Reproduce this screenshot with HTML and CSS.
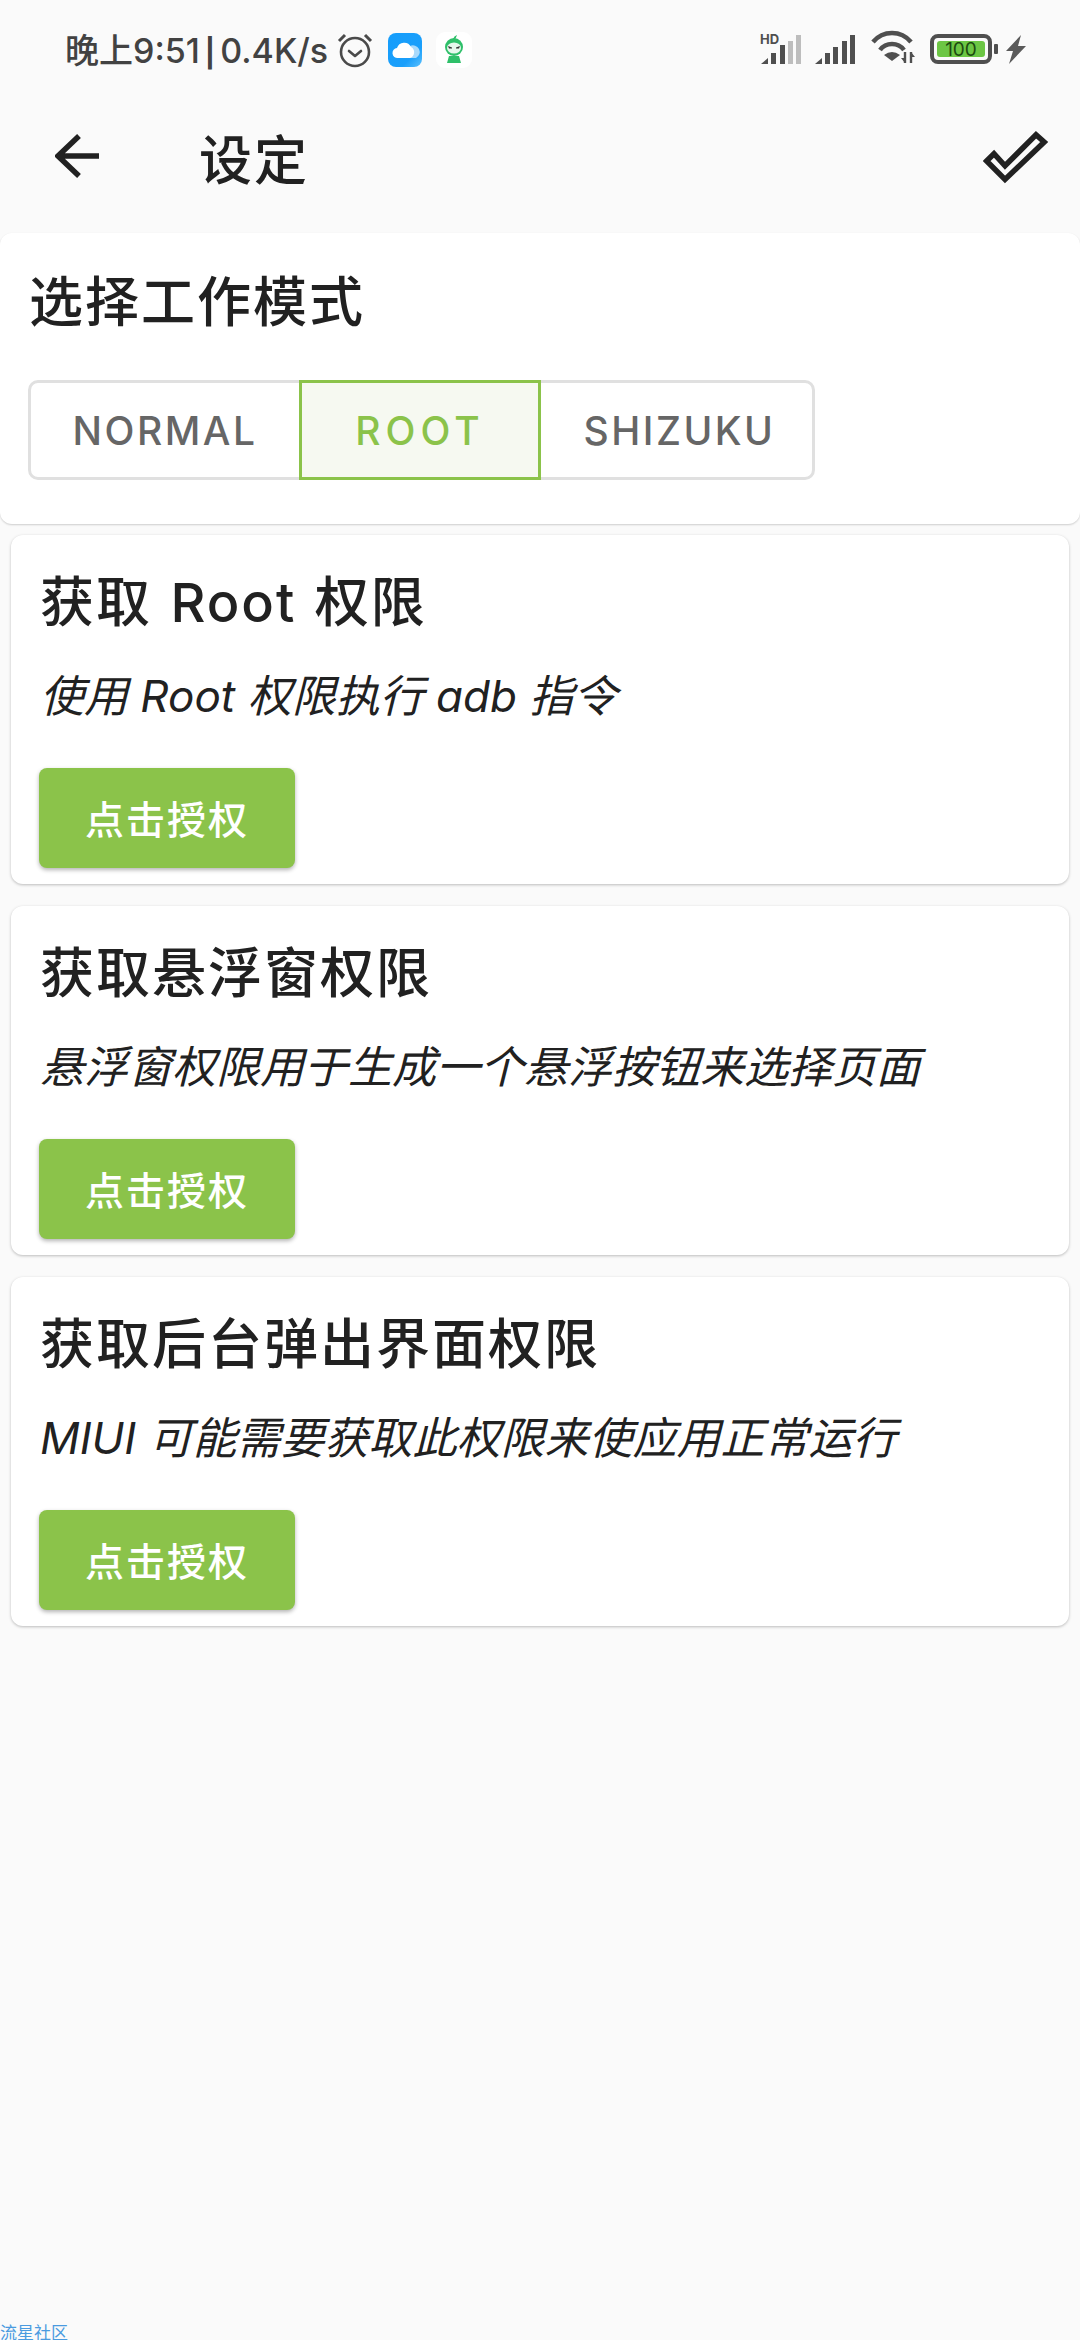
FILE: index.html
```html
<!DOCTYPE html>
<html lang="zh-CN">
<head>
<meta name="viewport" content="width=device-width, initial-scale=1">
<title>设定</title>
<link rel="stylesheet" href="styles.css">
</head>
<body>

<div class="status-bar">
  <div class="status-left">
    <span class="status-text">晚上9:51<span class="status-sep">|</span>0.4K/s</span>
    <svg class="ic-alarm" width="36" height="36" viewBox="0 0 36 36" fill="none" stroke="#4a4a4a">
      <circle cx="18" cy="20" r="14" stroke-width="2.6"/>
      <path d="M12 19l6 5 6-5" stroke-width="2.6" stroke-linecap="round" stroke-linejoin="round"/>
      <path d="M2 9l6-6M34 9l-6-6" stroke-width="3"/>
    </svg>
    <svg class="ic-cloud" width="34" height="34" viewBox="0 0 34 34">
      <defs>
        <linearGradient id="cloudBg" x1="0" y1="0" x2="1" y2="1">
          <stop offset="0" stop-color="#159dfb"/>
          <stop offset="0.7" stop-color="#1a9ffb"/>
          <stop offset="1" stop-color="#5cc0fc"/>
        </linearGradient>
      </defs>
      <rect width="34" height="34" rx="8" fill="url(#cloudBg)"/>
      <path d="M22 13a6 6 0 0 1 6 12H18z" fill="#a9dafc"/>
      <path d="M10 25a5 5 0 0 1-1-10 7.5 7.5 0 0 1 14-1 6 6 0 0 1-1 11z" fill="#fff"/>
    </svg>
    <svg class="ic-mascot" width="36" height="36" viewBox="0 0 36 36">
      <rect width="36" height="36" rx="9" fill="#fff"/>
      <circle cx="18" cy="15" r="9" fill="#2fc06a"/>
      <path d="M17 7q1-3 4-4-1 3-2 4z" fill="#2fc06a"/>
      <ellipse cx="18" cy="16" rx="7" ry="5.5" fill="#e6f7ec"/>
      <path d="M12 14l4 1.500v1h-3zM24 14l-4 1.500v1h3z" fill="#333"/>
      <path d="M13 24h10l2 7H11z" fill="#2fc06a"/>
    </svg>
  </div>
  <div class="status-right">
    <div class="signal-wrap">
      <span class="hd">HD</span>
      <svg width="41" height="30" viewBox="0 0 41 30">
        <path d="M1 30l7-6v6z" fill="#4f4f4f"/>
        <rect x="11" y="19" width="5" height="11" fill="#4f4f4f"/>
        <rect x="20" y="11" width="5" height="19" fill="#4f4f4f"/>
        <rect x="28" y="7" width="5" height="23" fill="#bdbdbd"/>
        <rect x="36" y="1" width="5" height="29" fill="#bdbdbd"/>
      </svg>
    </div>
    <svg width="41" height="30" viewBox="0 0 41 30">
      <path d="M0 30l7-6v6z" fill="#4f4f4f"/>
      <rect x="10" y="19" width="5" height="11" fill="#4f4f4f"/>
      <rect x="18" y="13" width="5" height="17" fill="#4f4f4f"/>
      <rect x="27" y="7" width="5" height="23" fill="#4f4f4f"/>
      <rect x="35" y="1" width="5" height="29" fill="#4f4f4f"/>
    </svg>
    <svg class="ic-wifi" width="44" height="34" viewBox="0 0 44 34" fill="none" stroke="#4f4f4f">
      <path d="M2 12C12 0 30 0 40 12" stroke-width="4.500"/>
      <path d="M9 20C15 12 27 12 33 20" stroke-width="4.500"/>
      <path d="M21 31l-8-6q8-6 16 0z" fill="#4f4f4f" stroke="none"/>
      <path d="M34 22v11M40 22v11" stroke-width="2.400"/>
      <path d="M30 28l4 5v-5zM44 27l-4-5v5z" fill="#4f4f4f" stroke="none"/>
    </svg>
    <div class="battery">
      <div class="battery-body"><span class="battery-fill">100</span></div>
      <span class="battery-nub"></span>
    </div>
    <svg width="20" height="29" viewBox="0 0 20 29">
      <path d="M15 0L0 16h7l-4 13L20 11h-8z" fill="#5a5a5a"/>
    </svg>
  </div>
</div>

<div class="app-bar">
  <svg class="back" width="44" height="44" viewBox="0 0 44 44" fill="none" stroke="#212121" stroke-width="5.500">
    <path d="M44 22H4M24 2L3 22l21 20"/>
  </svg>
  <h1 class="page-title">设定</h1>
  <svg class="check" width="66" height="54" viewBox="0 0 66 54" fill="none" stroke="#212121" stroke-width="5.500" stroke-linejoin="miter">
    <path d="M3.600 31L11 23.700l11 12.100L53 4.700l8.200 7.300L22 49.500z"/>
  </svg>
</div>

<div class="mode-card">
  <h2 class="mode-title">选择工作模式</h2>
  <div class="segments">
    <div class="seg seg-normal">NORMAL</div>
    <div class="seg seg-root">ROOT</div>
    <div class="seg seg-shizuku">SHIZUKU</div>
  </div>
</div>

<div class="card">
  <h3 class="card-title title-root">获取 Root 权限</h3>
  <p class="card-desc">使用 Root 权限执行 adb 指令</p>
  <button class="grant">点击授权</button>
</div>

<div class="card">
  <h3 class="card-title">获取悬浮窗权限</h3>
  <p class="card-desc">悬浮窗权限用于生成一个悬浮按钮来选择页面</p>
  <button class="grant">点击授权</button>
</div>

<div class="card">
  <h3 class="card-title">获取后台弹出界面权限</h3>
  <p class="card-desc">MIUI 可能需要获取此权限来使应用正常运行</p>
  <button class="grant">点击授权</button>
</div>

<div class="watermark">流星社区</div>

</body>
</html>
```

FILE: styles.css
```css
* {
  box-sizing: border-box;
}
html, body {
  margin: 0;
  height: 2340px;
}
body {
  position: relative;
  overflow: hidden;
  background: #fafafa;
  color: #212121;
  font-family: "Inter", "Noto Sans CJK SC", sans-serif;
}

/* status bar */
.status-bar {
  height: 100px;
  display: flex;
  justify-content: space-between;
  align-items: flex-start;
  padding: 32px 54px 0 65px;
}
.status-left {
  display: flex;
  align-items: center;
  height: 36px;
}
.status-text {
  margin-top: -3px;
  font-size: 34px;
  font-weight: 500;
  color: #424242;
  white-space: nowrap;
  width: 272px;
}
.status-sep {
  margin: 0 5px;
  font-size: 28px;
  font-weight: 700;
}
.ic-cloud {
  margin-left: 15px;
}
.ic-mascot {
  margin-left: 14px;
}
.status-right {
  display: flex;
  align-items: flex-end;
  height: 32px;
}
.signal-wrap {
  position: relative;
  margin-right: 14px;
  height: 30px;
}
.hd {
  position: absolute;
  left: 0;
  top: -1px;
  font-size: 13px;
  font-weight: 700;
  line-height: 13px;
  color: #4f4f4f;
}
.ic-wifi {
  margin: 0 15px;
}
.battery {
  display: flex;
  align-items: center;
  height: 30px;
  margin-right: 8px;
}
.battery-body {
  width: 62px;
  height: 30px;
  border: 4px solid #4f4f4f;
  border-radius: 8px;
  padding: 3px;
}
.battery-fill {
  display: block;
  height: 16px;
  line-height: 17px;
  font-size: 19px;
  text-align: center;
  color: #1c4a10;
  background: #6cc644;
  border-radius: 3px;
}
.battery-nub {
  width: 4px;
  height: 10px;
  margin-left: 2px;
  background: #4f4f4f;
  border-radius: 1px;
}

/* app bar */
.app-bar {
  height: 133px;
  display: flex;
  align-items: flex-start;
  padding: 34px 31px 0 55px;
}
.back {
  flex: none;
}
.page-title {
  margin: -3px 0 0 100px;
  font-size: 53px;
  line-height: 60px;
  font-weight: 500;
  letter-spacing: 2px;
}
.check {
  flex: none;
  margin-left: auto;
  margin-top: -4px;
}

/* mode card */
.mode-card {
  height: 291px;
  padding: 38px 28px 0;
  background: #fff;
  border-radius: 12px;
  box-shadow: 0 1px 2px rgba(0,0,0,0.18);
}
.mode-title {
  margin: 0;
  padding-left: 1px;
  font-size: 54px;
  line-height: 64px;
  font-weight: 500;
  letter-spacing: 2px;
}
.segments {
  display: flex;
  width: 787px;
  height: 100px;
  margin-top: 45px;
  border: 3px solid #e0e0e0;
  border-radius: 10px;
}
.seg {
  display: flex;
  align-items: center;
  justify-content: center;
  font-size: 39px;
  font-weight: 500;
  letter-spacing: 2.500px;
  color: #666;
}
.seg-normal {
  width: 268px;
}
.seg-root {
  width: 242px;
  margin: -3px 0;
  border: 3px solid #8bc34a;
  background: #f6f9f1;
  color: #8bc34a;
  letter-spacing: 5px;
}
.seg-shizuku {
  flex: 1;
  padding-left: 6px;
}

/* permission cards */
.card {
  height: 349px;
  margin: 11px 11px 0;
  padding: 37px 28px 0;
  background: #fff;
  border-radius: 12px;
  box-shadow: 0 1px 3px rgba(0,0,0,0.25);
}
.card + .card {
  margin-top: 22px;
}
.card-title {
  margin: 0;
  padding-left: 1px;
  font-size: 54px;
  line-height: 62px;
  font-weight: 500;
  letter-spacing: 2px;
}
.title-root {
  word-spacing: 2px;
}
.card-desc {
  margin: 37px 0 0;
  padding-left: 1px;
  font-size: 44px;
  line-height: 50px;
  font-style: italic;
}
.grant {
  display: block;
  width: 256px;
  height: 100px;
  margin-top: 47px;
  padding-bottom: 4px;
  border: none;
  border-radius: 8px;
  background: #8bc34a;
  color: #fff;
  font-family: inherit;
  font-size: 39px;
  font-weight: 500;
  letter-spacing: 2px;
  box-shadow: 0 2px 4px rgba(0,0,0,0.3);
}

.watermark {
  position: absolute;
  left: 0;
  bottom: -3px;
  font-size: 17px;
  line-height: 20px;
  color: #4a9be0;
}
```
